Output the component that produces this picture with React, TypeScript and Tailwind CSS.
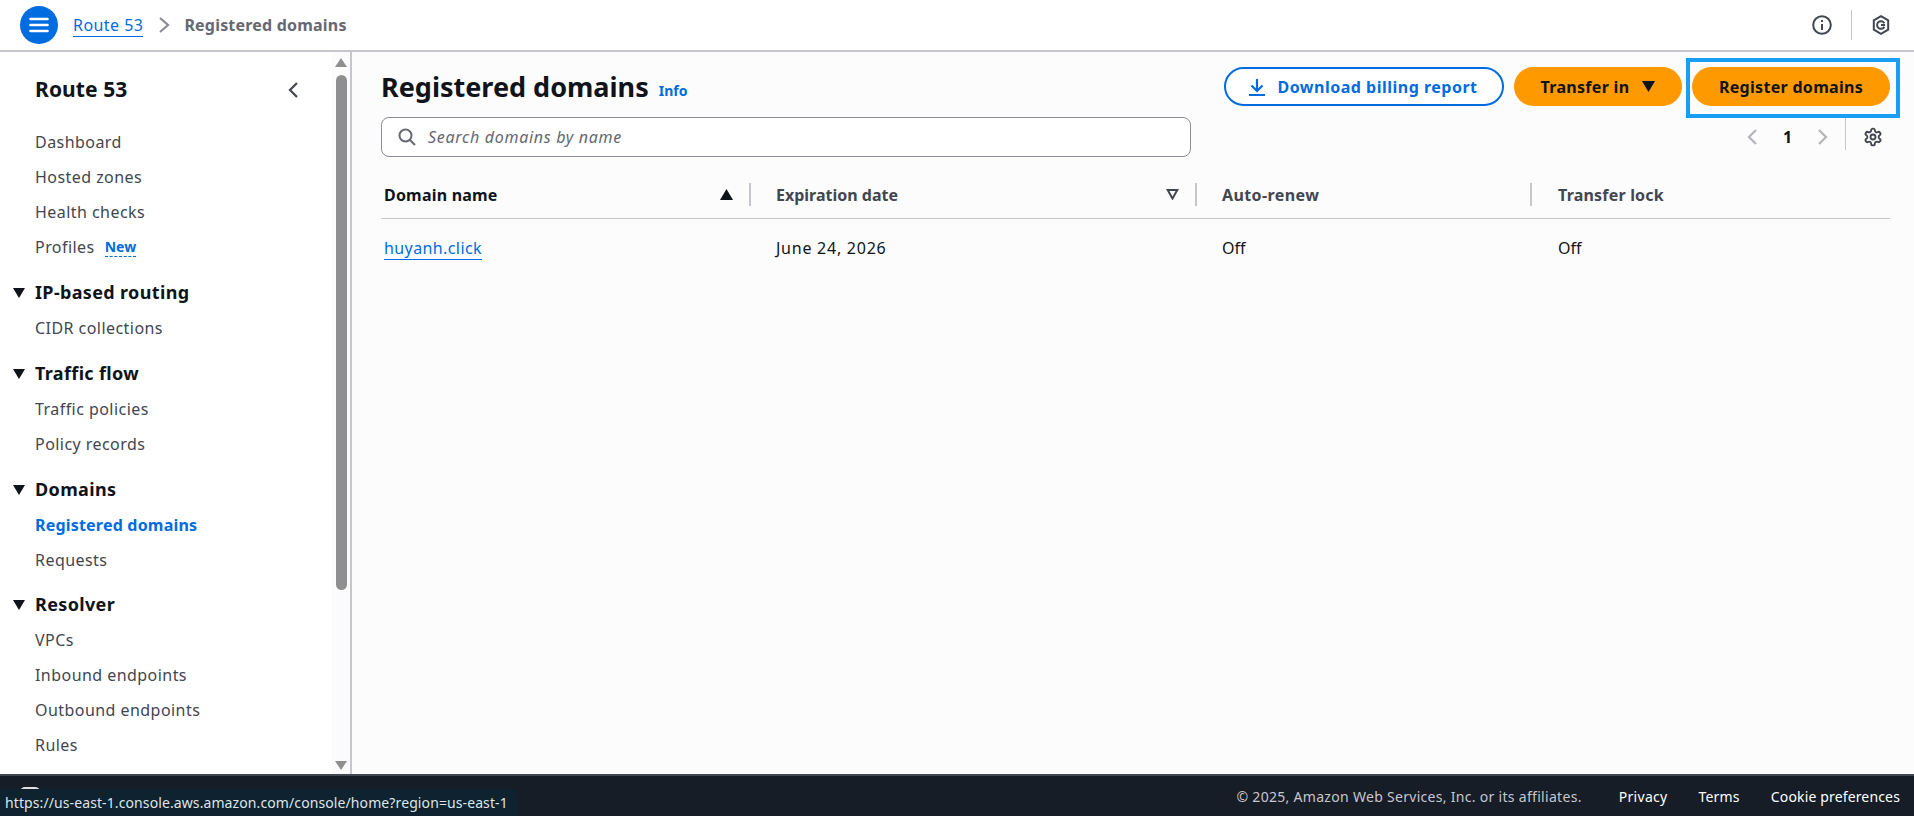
import React from "react";

const font = { fontFamily: '"Noto Sans", sans-serif' };

function NavItem({ label, active, badge }: { label: string; active?: boolean; badge?: boolean }) {
  return (
    <div className={`h-[35px] flex items-center pl-[35px] text-[16px] ${active ? "font-bold text-[#006ce0] tracking-[0.2px]" : "text-[#424650] tracking-[0.45px]"}`}>
      <span>{label}</span>
      {badge && (
        <span className="ml-[10px] mt-[2px] text-[14px] tracking-normal font-bold leading-[18px] text-[#006ce0] border-b border-dashed border-[#006ce0]">New</span>
      )}
    </div>
  );
}

function SectionHead({ label, tight }: { label: string; tight?: boolean }) {
  return (
    <div className={`h-[35px] flex items-center pl-[13px] text-[18px] tracking-[0.35px] font-bold text-[#0f141a] ${tight ? "mt-[10px]" : "mt-[11px]"}`}>
      <svg width="12" height="10" viewBox="0 0 12 10" className="mr-[10px] shrink-0">
        <path d="M0 0h12L6 10z" fill="#0f141a" />
      </svg>
      <span>{label}</span>
    </div>
  );
}

function Scrollbar() {
  return (
    <div className="w-[18px] ml-auto shrink-0 bg-[#fbfbfb] flex flex-col items-center pt-[6px] pb-[4px]">
      <svg width="12" height="9" viewBox="0 0 12 9"><path d="M6 0l6 9H0z" fill="#8f8f8f" /></svg>
      <div className="w-[11px] h-[515px] mt-[8px] rounded-[6px] bg-[#8f8f8f]" />
      <svg width="12" height="9" viewBox="0 0 12 9" className="mt-auto"><path d="M0 0h12L6 9z" fill="#8f8f8f" /></svg>
    </div>
  );
}

function PillButton({ children, className }: { children: React.ReactNode; className: string }) {
  return (
    <button className={`h-[39px] rounded-[20px] flex items-center justify-center text-[16px] font-bold whitespace-nowrap ${className}`}>
      {children}
    </button>
  );
}

export default function App() {
  return (
    <div style={font} className="relative w-[1914px] h-[816px] flex flex-col overflow-hidden bg-[#fcfcfc]">
      {/* Top bar */}
      <header className="h-[52px] shrink-0 bg-white border-b-2 border-[#c6c6cd] flex items-center pl-[20px] pr-[24px]">
        <div className="w-[38px] h-[38px] rounded-full bg-[#006ce0] flex items-center justify-center">
          <svg width="20" height="18" viewBox="0 0 20 18">
            <path d="M1.5 3h17M1.5 9h17M1.5 15h17" stroke="#fff" strokeWidth="2.6" strokeLinecap="round" />
          </svg>
        </div>
        <a className="ml-[15px] text-[16px] tracking-[0.45px] text-[#006ce0] border-b border-[#006ce0] leading-[22px]">Route 53</a>
        <svg width="12" height="18" viewBox="0 0 12 18" className="ml-[15px]">
          <path d="M2 2l8 7-8 7" fill="none" stroke="#8c8c94" strokeWidth="2.2" />
        </svg>
        <span className="ml-[14px] text-[16px] tracking-[0.2px] font-bold text-[#656871]">Registered domains</span>
        <svg width="20" height="20" viewBox="0 0 20 20" className="ml-auto" fill="none" stroke="#424650" strokeWidth="2">
          <circle cx="10" cy="10" r="8.8" />
          <path d="M10 9v6M10 5v2" />
        </svg>
        <div className="w-px h-[30px] bg-[#c6c6cd] ml-[19px]" />
        <svg width="18" height="20" viewBox="0 0 18 20" className="ml-[20px]" fill="none" stroke="#424650" strokeWidth="2">
          <path d="M9 1.2l7.2 4.1v9.4L9 18.8l-7.2-4.1V5.3z" />
          <path d="M12.3 8.3a3.8 3.8 0 1 0 0 3.4" />
          <path d="M9 10h4" />
        </svg>
      </header>

      <div className="flex-1 flex min-h-0">
        {/* Side navigation */}
        <aside className="w-[352px] shrink-0 bg-white border-r-2 border-[#c6c6cd] flex overflow-hidden">
          <nav className="w-[330px] shrink-0">
            <div className="h-[46px] mt-[15px] mb-[2px] flex items-center justify-between pl-[35px] pr-[31px]">
              <span className="text-[21px] tracking-[0.1px] font-bold text-[#0f141a]">Route 53</span>
              <svg width="12" height="18" viewBox="0 0 12 18">
                <path d="M10 2L3 9l7 7" fill="none" stroke="#424650" strokeWidth="2.2" />
              </svg>
            </div>
            <div className="pt-[9px]">
              <NavItem label="Dashboard" />
              <NavItem label="Hosted zones" />
              <NavItem label="Health checks" />
              <NavItem label="Profiles" badge />
              <SectionHead label="IP-based routing" />
              <NavItem label="CIDR collections" />
              <SectionHead label="Traffic flow" />
              <NavItem label="Traffic policies" />
              <NavItem label="Policy records" />
              <SectionHead label="Domains" />
              <NavItem label="Registered domains" active />
              <NavItem label="Requests" />
              <SectionHead label="Resolver" tight />
              <NavItem label="VPCs" />
              <NavItem label="Inbound endpoints" />
              <NavItem label="Outbound endpoints" />
              <NavItem label="Rules" />
              <NavItem label="Query logging" />
            </div>
          </nav>
          <Scrollbar />
        </aside>

        {/* Main */}
        <main className="flex-1 min-w-0 pl-[29px] pr-[24px]">
          <div className="h-[64px] flex items-center pt-[4px]">
            <h1 className="text-[27px] font-bold text-[#0f141a] leading-[36px] mt-[1px]">Registered domains</h1>
            <span className="ml-[10px] mt-[9px] text-[14px] font-bold text-[#006ce0]">Info</span>
            <div className="ml-auto flex items-center gap-[10px] mt-[1px]">
              <PillButton className="w-[280px] bg-white border-2 border-[#006ce0] text-[#006ce0] tracking-[0.5px] pr-[2px]">
                <svg width="18" height="18" viewBox="0 0 18 18" className="mr-[11px]" fill="none" stroke="#006ce0" strokeWidth="2.2">
                  <path d="M9 1v11M3.5 7.5L9 13l5.5-5.5M1 17h16" />
                </svg>
                Download billing report
              </PillButton>
              <PillButton className="w-[168px] bg-[#ff9900] text-[#0f141a] tracking-[0.3px]">
                Transfer in
                <svg width="13" height="11" viewBox="0 0 13 11" className="ml-[13px]"><path d="M0 0h13L6.5 11z" fill="#0f141a" /></svg>
              </PillButton>
              <div className="relative">
                <PillButton className="w-[198px] bg-[#ff9900] text-[#0f141a] tracking-[0.3px]">
                  Register domains
                </PillButton>
                <div className="absolute -left-[6px] -right-[10px] -top-[9px] -bottom-[12px] border-4 border-[#1a9ef5]" />
              </div>
            </div>
          </div>

          <div className="h-[40px] mt-[1px] flex items-start">
            <div className="w-[810px] h-[40px] rounded-[8px] bg-white border border-[#8c8c94] flex items-center pl-[16px]">
              <svg width="18" height="18" viewBox="0 0 18 18" fill="none" stroke="#656871" strokeWidth="2">
                <circle cx="7.5" cy="7.5" r="6" />
                <path d="M12 12l5 5" />
              </svg>
              <span className="ml-[12px] text-[16px] tracking-[0.7px] italic text-[#656871]">Search domains by name</span>
            </div>
            <div className="ml-auto flex items-center h-[32px] mt-[4px] pr-[7px]">
              <svg width="12" height="18" viewBox="0 0 12 18"><path d="M10 2L3 9l7 7" fill="none" stroke="#b4b4bb" strokeWidth="2.2" /></svg>
              <span className="ml-[25px] w-[10px] text-[16px] font-bold text-[#0f141a]">1</span>
              <svg width="12" height="18" viewBox="0 0 12 18" className="ml-[24px]"><path d="M2 2l7 7-7 7" fill="none" stroke="#b4b4bb" strokeWidth="2.2" /></svg>
              <div className="w-px h-[32px] self-start -mt-[3px] bg-[#c6c6cd] ml-[16px]" />
              <svg width="20" height="20" viewBox="0 0 24 24" className="ml-[17px]" fill="none" stroke="#424650" strokeWidth="2.2" strokeLinejoin="round">
                <path d="M12.2 2h-.4a2 2 0 0 0-2 2v.2a2 2 0 0 1-1 1.7l-.4.3a2 2 0 0 1-2 0l-.2-.1a2 2 0 0 0-2.7.7l-.2.4a2 2 0 0 0 .7 2.7l.2.1a2 2 0 0 1 1 1.7v.5a2 2 0 0 1-1 1.8l-.2.1a2 2 0 0 0-.7 2.7l.2.4a2 2 0 0 0 2.7.7l.2-.1a2 2 0 0 1 2 0l.4.3a2 2 0 0 1 1 1.7v.2a2 2 0 0 0 2 2h.4a2 2 0 0 0 2-2v-.2a2 2 0 0 1 1-1.7l.4-.3a2 2 0 0 1 2 0l.2.1a2 2 0 0 0 2.7-.7l.2-.4a2 2 0 0 0-.7-2.7l-.2-.1a2 2 0 0 1-1-1.8v-.5a2 2 0 0 1 1-1.7l.2-.1a2 2 0 0 0 .7-2.7l-.2-.4a2 2 0 0 0-2.7-.7l-.2.1a2 2 0 0 1-2 0l-.4-.3a2 2 0 0 1-1-1.7V4a2 2 0 0 0-2-2z" />
                <circle cx="12" cy="12" r="3" />
              </svg>
            </div>
          </div>

          {/* Table */}
          <div className="mt-[25px] grid grid-cols-[370px_446px_335px_1fr] h-[37px] border-b border-[#c6c6cd] text-[16px] font-bold pb-[11px]">
            <div className="flex items-center pl-[3px] pr-[19px] text-[#0f141a] tracking-[0.2px]">
              <span>Domain name</span>
              <svg width="13" height="11" viewBox="0 0 13 11" className="ml-auto"><path d="M6.5 0L13 11H0z" fill="#0f141a" /></svg>
              <div className="w-[2px] h-[23px] bg-[#c6c6cd] ml-[16px] -mr-[19px]" />
            </div>
            <div className="flex items-center pl-[25px] pr-[18px] text-[#424650]">
              <span>Expiration date</span>
              <svg width="13" height="11" viewBox="0 0 13 11" className="ml-auto" fill="none" stroke="#424650" strokeWidth="2"><path d="M1.7 1h9.6L6.5 9.5z" /></svg>
              <div className="w-[2px] h-[23px] bg-[#c6c6cd] ml-[16px] -mr-[18px]" />
            </div>
            <div className="flex items-center pl-[25px] text-[#424650] tracking-[0.4px]">
              <span>Auto-renew</span>
              <div className="w-[2px] h-[23px] bg-[#c6c6cd] ml-auto" />
            </div>
            <div className="flex items-center pl-[26px] text-[#424650] tracking-[0.2px]">
              <span>Transfer lock</span>
            </div>
          </div>
          <div className="grid grid-cols-[370px_446px_335px_1fr] h-[58px] items-center text-[16px] text-[#0f141a]">
            <div className="pl-[3px]"><a className="text-[#006ce0] border-b border-[#006ce0] leading-[22px] inline-block tracking-[0.4px]">huyanh.click</a></div>
            <div className="pl-[25px] tracking-[0.75px]">June 24, 2026</div>
            <div className="pl-[25px]">Off</div>
            <div className="pl-[26px]">Off</div>
          </div>
        </main>
      </div>

      {/* Footer */}
      <footer className="h-[42px] shrink-0 bg-[#161d26] border-t-2 border-[#414750] flex items-center justify-end pr-[14px] text-[14px]">
        <span className="text-[#c6c6cd] tracking-[0.3px]">© 2025, Amazon Web Services, Inc. or its affiliates.</span>
        <span className="ml-[37px] text-white tracking-[0.3px]">Privacy</span>
        <span className="ml-[31px] text-white tracking-[0.2px]">Terms</span>
        <span className="ml-[31px] text-white tracking-[0.15px]">Cookie preferences</span>
      </footer>

      {/* Browser status bubble over the footer */}
      <div className="absolute left-[20px] bottom-[16px] w-[20px] h-[13px] rounded-t-[5px] border-2 border-b-0 border-[#dedee3]" />
      <div className="absolute left-0 bottom-0 w-[517px] h-[27px] bg-[#0e222f] rounded-tr-[6px] flex items-center pl-[5px] text-[14px] tracking-[0.1px] text-[#dfe5ea] whitespace-nowrap">
        https://us-east-1.console.aws.amazon.com/console/home?region=us-east-1
      </div>
    </div>
  );
}
